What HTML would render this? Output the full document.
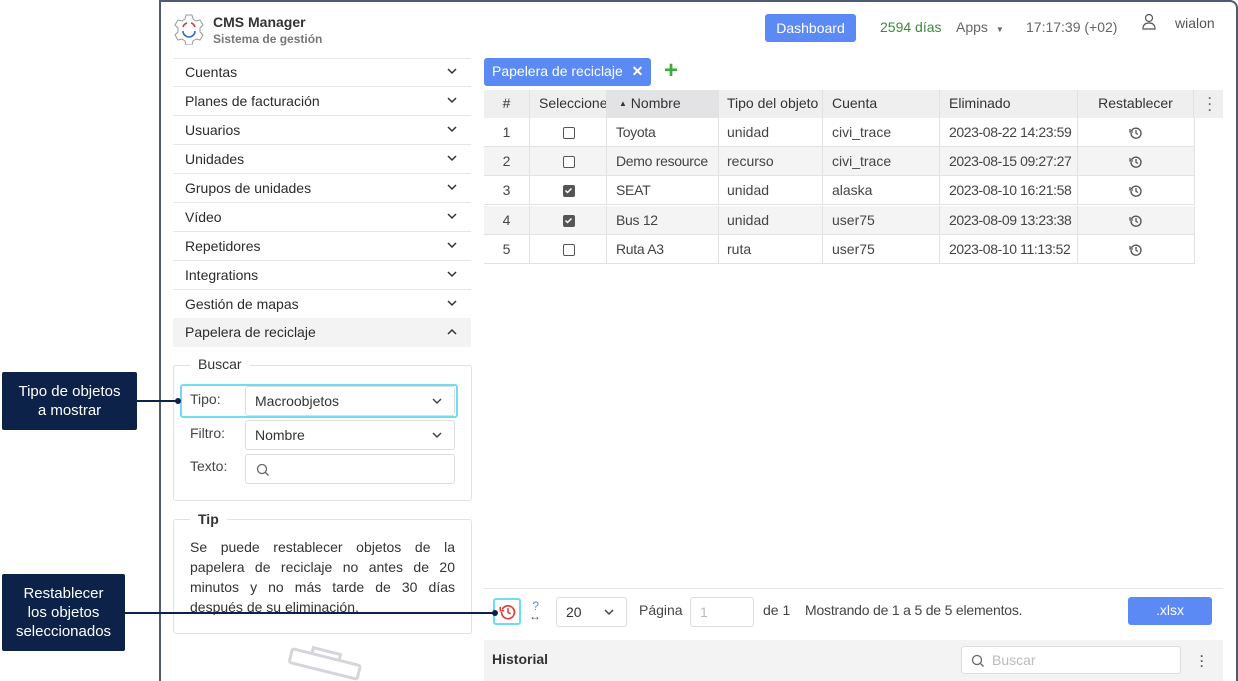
<!DOCTYPE html>
<html style="height:681px;overflow:hidden"><head><meta charset="utf-8"><style>
*{box-sizing:border-box;margin:0;padding:0}
body{width:1238px;height:681px;overflow:hidden;background:#fff;font-family:"Liberation Sans",Arial,sans-serif;font-size:14px;color:#333;position:relative}
.a{position:absolute}
.frame{left:159px;top:0;width:1079px;height:681px;border:2px solid #4f5b73;border-bottom:none;border-radius:0 8px 0 0}
.mi{position:absolute;left:173px;width:298px;height:29px;border-bottom:1px solid #e6e6e6;padding-left:12px;line-height:28px;color:#2b2b2b;font-size:14px}
.mi svg{position:absolute;right:14px;top:10px}
.th{position:absolute;top:90px;height:28px;line-height:26px;font-size:14px;color:#333;border-right:1px solid #e2e2e2;white-space:nowrap}
.td{position:absolute;height:29px;line-height:28px;font-size:14px;color:#444;border-right:1px solid #e2e2e2;padding-left:9px;white-space:nowrap;overflow:hidden}
.cb{position:absolute;width:12px;height:12px;border:1.5px solid #555;border-radius:2px;background:#fff}
.cb.on{background:#555}
.inp{position:absolute;border:1px solid #ddd;border-radius:3px;background:#fff;height:30px;line-height:28px;padding-left:9px;font-size:14px;color:#333}
.lbl{position:absolute;font-size:14px;color:#444}
.call{position:absolute;background:#0c2248;color:#fff;font-size:15px;text-align:center;border-radius:2px;line-height:19px}
</style></head><body>
<div class="a frame"></div>
<svg class="a" style="left:173px;top:13px" width="32" height="32" viewBox="0 0 32 32"><path d="M13 2h6l1 4 3 2 4-1 3 5-3 3v4l3 3-3 5-4-1-3 2-1 4h-6l-1-4-3-2-4 1-3-5 3-3v-4L2 12l3-5 4 1 3-2z" fill="none" stroke="#999" stroke-width="1"/><path d="M10 14a6 6 0 0 1 4-4" fill="none" stroke="#e03040" stroke-width="1.6"/><path d="M18 10a6 6 0 0 1 4 4" fill="none" stroke="#e03040" stroke-width="1.6"/><path d="M10 18a6 6 0 0 0 12 0" fill="none" stroke="#2a6cc8" stroke-width="1.6"/></svg>
<div class="a" style="left:213px;top:14px;font-weight:bold;font-size:14px;color:#333">CMS Manager</div>
<div class="a" style="left:213px;top:32px;font-weight:bold;font-size:12px;color:#777">Sistema de gestión</div>
<div class="a" style="left:765px;top:14px;width:91px;height:28px;background:#5b8af5;border-radius:3px;color:#fff;text-align:center;line-height:28px;font-size:14px">Dashboard</div>
<div class="a" style="left:880px;top:19px;color:#3d8a3d;font-size:14px">2594 días</div>
<div class="a" style="left:956px;top:19px;color:#666;font-size:14px">Apps <span style="font-size:8px;margin-left:4px">▼</span></div>
<div class="a" style="left:1026px;top:19px;color:#666;font-size:14px">17:17:39 (+02)</div>
<svg class="a" style="left:1141px;top:13px" width="16" height="18" viewBox="0 0 16 18"><circle cx="8" cy="5" r="3.5" fill="none" stroke="#555" stroke-width="1.2"/><path d="M2 16c0-4 2-6 6-6s6 2 6 6z" fill="none" stroke="#555" stroke-width="1.2"/></svg>
<div class="a" style="left:1175px;top:15px;color:#555;font-size:14px">wialon</div>

<div class="a" style="left:173px;top:58px;width:298px;border-top:1px solid #e6e6e6"></div>
<div class="mi" style="top:58px">Cuentas<svg width="10" height="7"><path d="M1 1l4 4 4-4" fill="none" stroke="#333" stroke-width="1.5"/></svg></div>
<div class="mi" style="top:87px">Planes de facturación<svg width="10" height="7"><path d="M1 1l4 4 4-4" fill="none" stroke="#333" stroke-width="1.5"/></svg></div>
<div class="mi" style="top:116px">Usuarios<svg width="10" height="7"><path d="M1 1l4 4 4-4" fill="none" stroke="#333" stroke-width="1.5"/></svg></div>
<div class="mi" style="top:145px">Unidades<svg width="10" height="7"><path d="M1 1l4 4 4-4" fill="none" stroke="#333" stroke-width="1.5"/></svg></div>
<div class="mi" style="top:174px">Grupos de unidades<svg width="10" height="7"><path d="M1 1l4 4 4-4" fill="none" stroke="#333" stroke-width="1.5"/></svg></div>
<div class="mi" style="top:203px">Vídeo<svg width="10" height="7"><path d="M1 1l4 4 4-4" fill="none" stroke="#333" stroke-width="1.5"/></svg></div>
<div class="mi" style="top:232px">Repetidores<svg width="10" height="7"><path d="M1 1l4 4 4-4" fill="none" stroke="#333" stroke-width="1.5"/></svg></div>
<div class="mi" style="top:261px">Integrations<svg width="10" height="7"><path d="M1 1l4 4 4-4" fill="none" stroke="#333" stroke-width="1.5"/></svg></div>
<div class="mi" style="top:290px">Gestión de mapas<svg width="10" height="7"><path d="M1 1l4 4 4-4" fill="none" stroke="#333" stroke-width="1.5"/></svg></div>
<div class="mi" style="top:318px;background:#f3f3f3;border:none">Papelera de reciclaje<svg width="10" height="7"><path d="M1 6l4-4 4 4" fill="none" stroke="#333" stroke-width="1.5"/></svg></div>

<div class="a" style="left:173px;top:365px;width:299px;height:136px;border:1px solid #e2e2e2;border-radius:3px"></div>
<div class="a" style="left:190px;top:356px;background:#fff;padding:0 8px;font-size:14px;color:#333">Buscar</div>
<div class="a" style="left:180px;top:384px;width:278px;height:34px;border:2px solid #6fdcef;border-radius:3px"></div>
<div class="lbl" style="left:190px;top:391px">Tipo:</div>
<div class="inp" style="left:245px;top:386px;width:210px">Macroobjetos<svg style="position:absolute;right:12px;top:11px" width="10" height="7"><path d="M1 1l4 4 4-4" fill="none" stroke="#444" stroke-width="1.5"/></svg></div>
<div class="lbl" style="left:190px;top:425px">Filtro:</div>
<div class="inp" style="left:245px;top:420px;width:210px">Nombre<svg style="position:absolute;right:12px;top:11px" width="10" height="7"><path d="M1 1l4 4 4-4" fill="none" stroke="#444" stroke-width="1.5"/></svg></div>
<div class="lbl" style="left:190px;top:458px">Texto:</div>
<div class="inp" style="left:245px;top:454px;width:210px"><svg style="position:absolute;left:10px;top:8px" width="14" height="14"><circle cx="6" cy="6" r="4.5" fill="none" stroke="#666" stroke-width="1.3"/><path d="M9.5 9.5l3 3" stroke="#666" stroke-width="1.3"/></svg></div>

<div class="a" style="left:173px;top:519px;width:299px;height:115px;border:1px solid #e2e2e2;border-radius:3px"></div>
<div class="a" style="left:190px;top:511px;background:#fff;padding:0 8px;font-size:14px;color:#333;font-weight:bold">Tip</div>
<div class="a" style="left:190px;top:537px;width:265px;font-size:14px;line-height:20px;color:#333;text-align:justify">Se puede restablecer objetos de la papelera de reciclaje no antes de 20 minutos y no más tarde de 30 días después de su eliminación.</div>
<svg class="a" style="left:285px;top:645px" width="80" height="36"><g transform="rotate(14 40 18)" fill="none" stroke="#d4d6dc" stroke-width="3"><rect x="5" y="12" width="70" height="14" rx="2"/><path d="M25 12v-6h28v6"/></g></svg>

<div class="a" style="left:484px;top:58px;width:167px;height:28px;background:#5b8af5;border-radius:3px;color:#fff;line-height:27px;padding-left:8px;font-size:14px">Papelera de reciclaje <span style="margin-left:5px;font-weight:bold">✕</span></div>
<div class="a" style="left:664px;top:58px;color:#3aaa3a;font-size:24px;font-weight:bold;line-height:26px">+</div>

<div class="a" style="left:484px;top:90px;width:739px;height:28px;background:#efeff0"></div>
<div class="a" style="left:607px;top:90px;width:112px;height:28px;background:#e3e3e5"></div>
<div class="th" style="left:484px;width:46px;text-align:center">#</div>
<div class="th" style="left:530px;width:77px;padding-left:9px;overflow:hidden">Seleccione</div>
<div class="th" style="left:607px;width:112px;padding-left:12px"><span style="font-size:8px;vertical-align:2px">▲</span> Nombre</div>
<div class="th" style="left:719px;width:104px;padding-left:8px;overflow:hidden">Tipo del objeto</div>
<div class="th" style="left:823px;width:117px;padding-left:9px">Cuenta</div>
<div class="th" style="left:940px;width:138px;padding-left:9px">Eliminado</div>
<div class="th" style="left:1078px;width:116px;text-align:center">Restablecer</div>
<div class="a" style="left:1208px;top:95px;color:#666;font-weight:bold;line-height:6px;font-size:12px">·<br>·<br>·</div>

<div id="rows"></div>
<script>
var R=[["1",0,"Toyota","unidad","civi_trace","2023-08-22 14:23:59"],["2",0,"Demo resource","recurso","civi_trace","2023-08-15 09:27:27"],["3",1,"SEAT","unidad","alaska","2023-08-10 16:21:58"],["4",1,"Bus 12","unidad","user75","2023-08-09 13:23:38"],["5",0,"Ruta A3","ruta","user75","2023-08-10 11:13:52"]];
var h="";var ic='<svg width="14" height="14" viewBox="0 0 14 14" style="position:absolute;left:51px;top:8px"><path d="M2.5 5A5 5 0 1 1 2 7" fill="none" stroke="#555" stroke-width="1.4"/><path d="M1 3v3h3" fill="none" stroke="#555" stroke-width="1.3"/><path d="M7 4v3.3l2 1.2" fill="none" stroke="#555" stroke-width="1.3"/></svg>';
R.forEach(function(r,i){var t=118+i*29.2;var bg=i%2?"#f4f4f4":"#fff";
h+='<div class="a" style="left:484px;top:'+t+'px;width:711px;height:29px;background:'+bg+';border-bottom:1px solid #e2e2e2"></div>';
h+='<div class="td" style="left:484px;top:'+t+'px;width:46px;padding:0;text-align:center">'+r[0]+'</div>';
h+='<div class="td" style="left:530px;top:'+t+'px;width:77px"><div class="cb'+(r[1]?' on':'')+'" style="left:33px;top:9px">'+(r[1]?'<svg width="9" height="9" style="position:absolute;left:0;top:0"><path d="M1.5 4.5l2 2 4-4" fill="none" stroke="#fff" stroke-width="1.5"/></svg>':'')+'</div></div>';
h+='<div class="td" style="left:607px;top:'+t+'px;width:112px;letter-spacing:-0.3px">'+r[2]+'</div>';
h+='<div class="td" style="left:719px;top:'+t+'px;width:104px;padding-left:8px">'+r[3]+'</div>';
h+='<div class="td" style="left:823px;top:'+t+'px;width:117px">'+r[4]+'</div>';
h+='<div class="td" style="left:940px;top:'+t+'px;width:138px;letter-spacing:-0.4px">'+r[5]+'</div>';
h+='<div class="td" style="left:1078px;top:'+t+'px;width:117px">'+ic+'</div>';});
document.getElementById("rows").innerHTML=h;
</script>

<div class="a" style="left:484px;top:588px;width:739px;border-top:1px solid #e6e6e6"></div>
<div class="a" style="left:493px;top:598px;width:28px;height:27px;border:2px solid #6fdcef;border-radius:3px"><svg width="18" height="18" viewBox="0 0 14 14" style="position:absolute;left:4px;top:3px"><path d="M2.5 5A5 5 0 1 1 2 7" fill="none" stroke="#e0403a" stroke-width="1.3"/><path d="M1 3v3h3" fill="none" stroke="#e0403a" stroke-width="1.2"/><path d="M7 4v3.3l2 1.2" fill="none" stroke="#e0403a" stroke-width="1.2"/></svg></div>
<div class="a" style="left:529px;top:601px;font-size:12px;color:#5b8af5;line-height:10px">&nbsp;?<br><span style="color:#555">↔</span></div>
<div class="inp" style="left:556px;top:597px;width:71px">20<svg style="position:absolute;right:12px;top:11px" width="10" height="7"><path d="M1 1l4 4 4-4" fill="none" stroke="#444" stroke-width="1.5"/></svg></div>
<div class="a" style="left:639px;top:602px;color:#444">Página</div>
<div class="inp" style="left:690px;top:597px;width:64px;color:#bbb">1</div>
<div class="a" style="left:763px;top:602px;color:#444">de 1</div>
<div class="a" style="left:805px;top:602px;color:#444;letter-spacing:-0.2px">Mostrando de 1 a 5 de 5 elementos.</div>
<div class="a" style="left:1128px;top:597px;width:84px;height:28px;background:#5b8af5;border-radius:3px;color:#fff;text-align:center;line-height:27px">.xlsx</div>

<div class="a" style="left:484px;top:640px;width:739px;height:41px;background:#f3f3f3"></div>
<div class="a" style="left:492px;top:651px;color:#333;font-weight:bold;font-size:14px">Historial</div>
<div class="inp" style="left:961px;top:646px;width:220px;height:28px;color:#bbb;padding-left:30px;line-height:26px">Buscar<svg style="position:absolute;left:9px;top:7px" width="14" height="14"><circle cx="6" cy="6" r="4.5" fill="none" stroke="#666" stroke-width="1.3"/><path d="M9.5 9.5l3 3" stroke="#666" stroke-width="1.3"/></svg></div>
<div class="a" style="left:1200px;top:654px;color:#555;font-weight:bold;line-height:5px;font-size:12px">·<br>·<br>·</div>

<div class="call" style="left:2px;top:372px;width:135px;height:58px;padding-top:10px">Tipo de objetos<br>a mostrar</div>
<div class="a" style="left:137px;top:400px;width:41px;height:2px;background:#0c2248"></div>
<div class="a" style="left:175px;top:398px;width:6px;height:6px;border-radius:50%;background:#0c2248"></div>
<div class="call" style="left:2px;top:574px;width:123px;height:77px;padding-top:10px">Restablecer<br>los objetos<br>seleccionados</div>
<div class="a" style="left:125px;top:612px;width:370px;height:2px;background:#0c2248"></div>
<div class="a" style="left:492px;top:610px;width:6px;height:6px;border-radius:50%;background:#0c2248"></div>
</body></html>
